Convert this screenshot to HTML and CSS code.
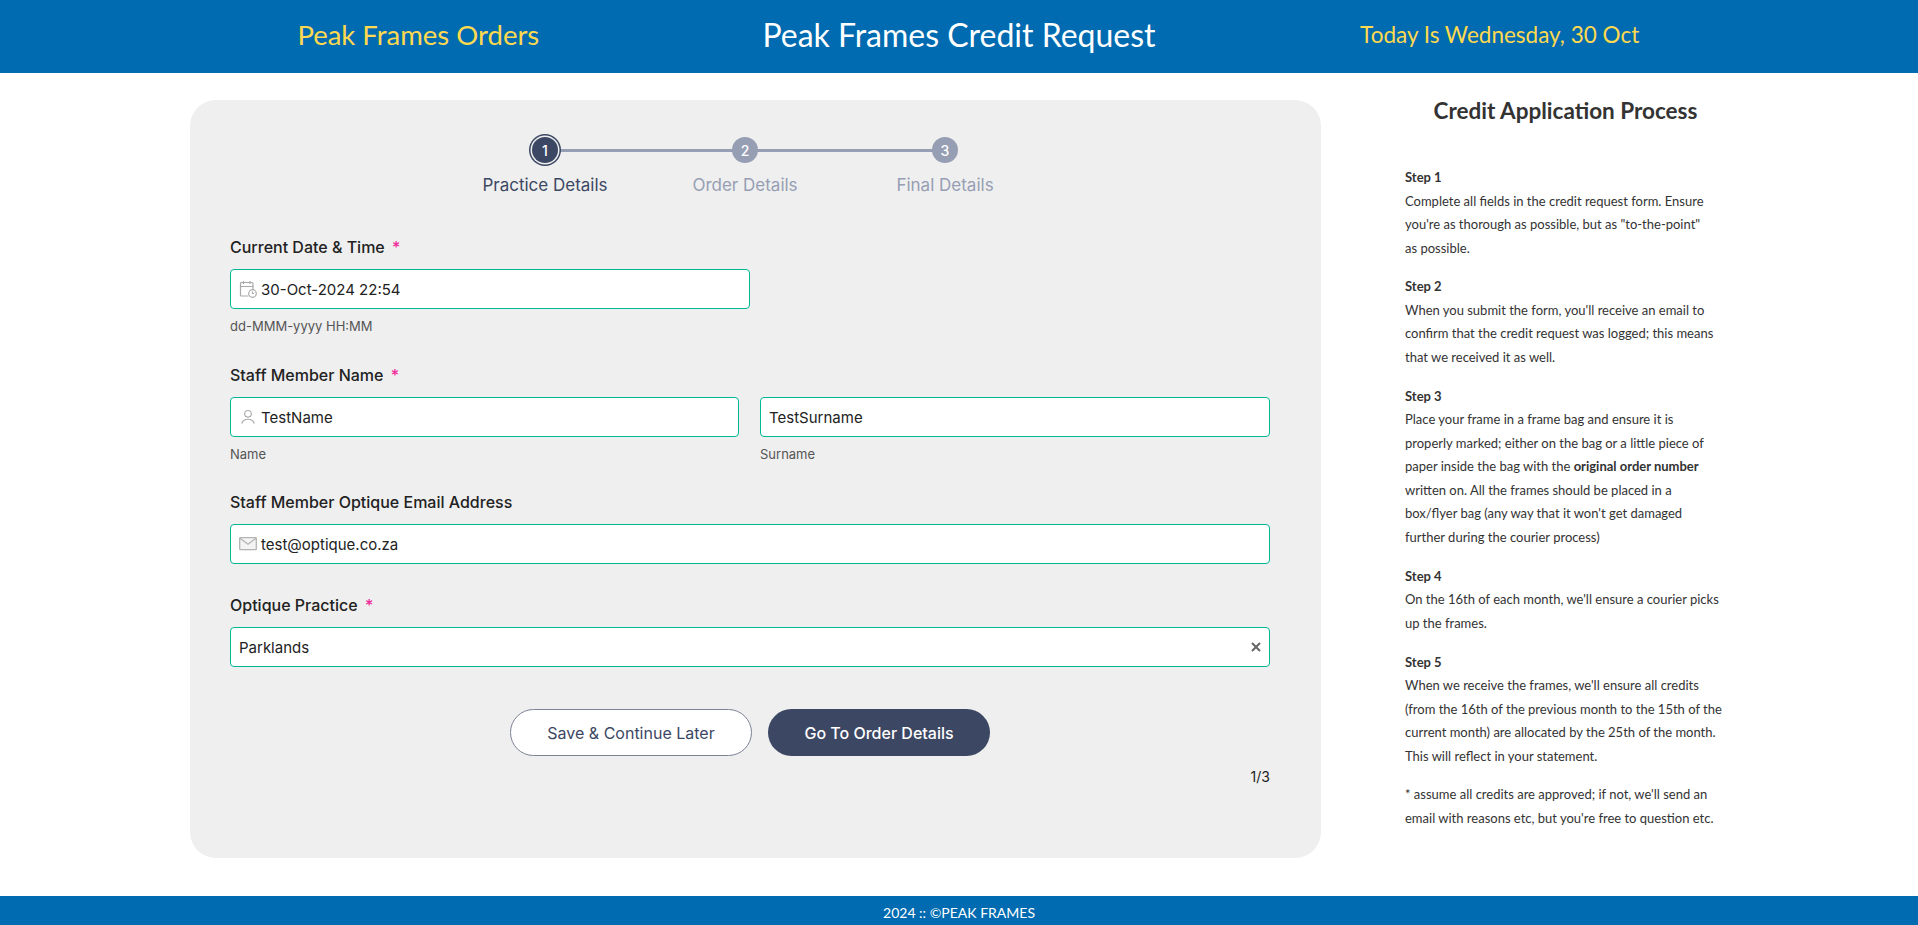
FILE: index.html
```html
<!DOCTYPE html>
<html lang="en">
<head>
<meta charset="utf-8">
<title>Peak Frames Credit Request</title>
<link rel="stylesheet" href="styles.css">
</head>
<body>
<header class="topbar">
  <div class="topbar-side">Peak Frames Orders</div>
  <h1 class="topbar-title">Peak Frames Credit Request</h1>
  <div class="topbar-date">Today Is Wednesday, 30 Oct</div>
</header>
<main class="main">
  <section class="card">
    <ol class="stepper">
      <li class="step step-active"><span class="step-dot">1</span><span class="step-label">Practice Details</span></li>
      <li class="step"><span class="step-dot">2</span><span class="step-label">Order Details</span></li>
      <li class="step"><span class="step-dot">3</span><span class="step-label">Final Details</span></li>
    </ol>
    <form class="form">
      <div class="field field-date">
        <label class="label">Current Date &amp; Time <span class="req">*</span></label>
        <div class="input">
          <svg class="icon" viewBox="0 0 18 18" width="18" height="18" fill="none" stroke="#a9a9a9" stroke-width="1.200"><path d="M9.500 16H2.500a1 1 0 0 1-1-1V3.500a1 1 0 0 1 1-1h10.500a1 1 0 0 1 1 1V9"/><path d="M1.500 6.500h12.500M4.500 1v3M11 1v3"/><circle cx="13.500" cy="13.500" r="3.800"/><path d="M13.500 11.500v2h1.500"/></svg>
          <span class="value">30-Oct-2024 22:54</span>
        </div>
        <div class="hint">dd-MMM-yyyy HH:MM</div>
      </div>
      <div class="field field-name">
        <label class="label">Staff Member Name <span class="req">*</span></label>
        <div class="pair">
          <div>
            <div class="input">
              <svg class="icon" viewBox="0 0 18 18" width="18" height="18" fill="none" stroke="#a9a9a9" stroke-width="1.100"><circle cx="9" cy="5.800" r="3.300"/><path d="M2.800 15.500c.7-2.800 3-4.200 6.200-4.200s5.500 1.400 6.200 4.200"/></svg>
              <span class="value">TestName</span>
            </div>
            <div class="hint">Name</div>
          </div>
          <div>
            <div class="input"><span class="value">TestSurname</span></div>
            <div class="hint">Surname</div>
          </div>
        </div>
      </div>
      <div class="field field-email">
        <label class="label">Staff Member Optique Email Address</label>
        <div class="input">
          <svg class="icon" viewBox="0 0 18 18" width="18" height="18" fill="#f4f4f4" stroke="#b4b4b4" stroke-width="1.300"><rect x="0.700" y="2.700" width="16.600" height="12" rx="0.600"/><path d="M1 3.200l8 6 8-6" fill="none"/></svg>
          <span class="value">test@optique.co.za</span>
        </div>
      </div>
      <div class="field field-practice">
        <label class="label">Optique Practice <span class="req">*</span></label>
        <div class="input input-clear">
          <span class="value">Parklands</span>
          <svg class="clear" viewBox="0 0 10 10" width="10" height="10" fill="none" stroke="#666" stroke-width="2"><path d="M1 1l8 8M9 1L1 9"/></svg>
        </div>
      </div>
      <div class="actions">
        <button type="button" class="btn btn-light">Save &amp; Continue Later</button>
        <button type="button" class="btn btn-dark">Go To Order Details</button>
      </div>
      <div class="page-count">1/3</div>
    </form>
  </section>
  <aside class="side">
    <h2 class="side-title">Credit Application Process</h2>
    <div class="side-block"><h3 class="side-step">Step 1</h3><p>Complete all fields in the credit request form. Ensure<br>you're as thorough as possible, but as "to-the-point"<br>as possible.</p></div>
    <div class="side-block"><h3 class="side-step">Step 2</h3><p>When you submit the form, you'll receive an email to<br>confirm that the credit request was logged; this means<br>that we received it as well.</p></div>
    <div class="side-block"><h3 class="side-step">Step 3</h3><p>Place your frame in a frame bag and ensure it is<br>properly marked; either on the bag or a little piece of<br>paper inside the bag with the <strong>original order number</strong><br>written on. All the frames should be placed in a<br>box/flyer bag (any way that it won't get damaged<br>further during the courier process)</p></div>
    <div class="side-block"><h3 class="side-step">Step 4</h3><p>On the 16th of each month, we'll ensure a courier picks<br>up the frames.</p></div>
    <div class="side-block"><h3 class="side-step">Step 5</h3><p>When we receive the frames, we'll ensure all credits<br>(from the 16th of the previous month to the 15th of the<br>current month) are allocated by the 25th of the month.<br>This will reflect in your statement.</p></div>
    <p class="side-note">* assume all credits are approved; if not, we'll send an<br>email with reasons etc, but you're free to question etc.</p>
  </aside>
</main>
<footer class="footer">2024 :: ©PEAK FRAMES</footer>
</body>
</html>
```
FILE: styles.css
```css
* { box-sizing: border-box; }
html, body { margin: 0; padding: 0; }
body {
  width: 1918px;
  height: 925px;
  overflow: hidden;
  background: #fff;
  font-family: Inter, "Liberation Sans", sans-serif;
  color: #222;
  display: flex;
  flex-direction: column;
}
.topbar {
  height: 73px;
  flex: none;
  background: #006bb0;
  padding: 0 148px 5px;
  display: grid;
  grid-template-columns: 1fr 1fr 1fr;
  align-items: center;
  text-align: center;
  font-family: Lato, sans-serif;
  font-weight: 400;
}
.topbar-side { color: #ffd94f; font-size: 27.500px; }
.topbar-title { margin: 0; color: #fff; font-size: 32px; font-weight: 400; }
.topbar-date { color: #ffd94f; font-size: 22.500px; }
.main {
  flex: 1;
  padding: 27px 0 38px 190px;
  display: flex;
  min-height: 0;
}
.card {
  width: 1131px;
  background: #efefef;
  border-radius: 26px;
  padding: 37px 51px 0 40px;
}
.stepper {
  list-style: none;
  margin: 0 0 0 215px;
  padding: 0;
  display: flex;
  width: 600px;
}
.step {
  width: 200px;
  display: flex;
  flex-direction: column;
  align-items: center;
  position: relative;
  color: #969eb4;
  font-size: 17px;
}
.step + .step::before {
  content: "";
  position: absolute;
  top: 12px;
  right: 50%;
  width: 200px;
  height: 3px;
  background: #969eb4;
}
.step-dot {
  position: relative;
  z-index: 1;
  width: 26px;
  height: 26px;
  border-radius: 50%;
  background: #969eb4;
  color: #fff;
  font-size: 14px;
  font-weight: 500;
  display: flex;
  align-items: center;
  justify-content: center;
}
.step-active { color: #3c4763; }
.step-active .step-dot {
  background: #3c4763;
  box-shadow: 0 0 0 1.500px #efefef, 0 0 0 3px #3c4763;
}
.step-label { margin-top: 11px; line-height: 22px; }
.form { margin-top: 40px; }
.field { display: block; }
.label {
  display: block;
  font-size: 16px;
  font-weight: 500;
  line-height: 22px;
  color: #222;
  margin-bottom: 11px;
}
.req { color: #f0289a; margin-left: 3px; }
.input {
  height: 40px;
  background: #fff;
  border: 1px solid #00b894;
  border-radius: 4px;
  display: flex;
  align-items: center;
  padding-left: 8px;
  font-size: 15px;
  color: #222;
}
.icon { flex: none; margin-right: 4px; }
.input-clear { justify-content: space-between; padding-right: 8px; }
.clear { flex: none; }
.hint {
  font-size: 13px;
  line-height: 18px;
  color: #555;
  margin-top: 8px;
}
.field-date .input { width: 520px; }
.field-name { margin-top: 29px; }
.pair { display: grid; grid-template-columns: 509px 510px; column-gap: 21px; }
.field-email { margin-top: 28px; }
.field-practice { margin-top: 30px; }
.actions {
  margin-top: 42px;
  display: flex;
  justify-content: center;
  gap: 16px;
}
.btn {
  height: 47px;
  border-radius: 24px;
  font-family: Inter, sans-serif;
  font-size: 16px;
  font-weight: 500;
  padding: 0;
}
.btn-light {
  width: 242px;
  background: #fff;
  border: 1px solid #7c8394;
  color: #3c4763;
  font-weight: 400;
}
.btn-dark {
  width: 222px;
  background: #3c4763;
  border: 0;
  color: #fff;
}
.page-count {
  margin-top: 11px;
  text-align: right;
  font-size: 14px;
  line-height: 20px;
  color: #222;
}
.side {
  width: 321px;
  margin-left: 84px;
  color: #333;
  font-family: Lato, sans-serif;
  font-size: 13px;
  line-height: 23.500px;
  white-space: nowrap;
}
.side p { margin: 0; }
.side-title {
  margin: 0 0 44px;
  font-size: 22.500px;
  line-height: 22px;
  font-weight: 700;
  text-align: center;
}
.side-block { margin-bottom: 15.400px; }
.side-step { margin: 0; font-size: 13px; font-weight: 700; line-height: 23.500px; }
.footer {
  height: 29px;
  flex: none;
  background: #006bb0;
  color: #fff;
  font-family: Lato, sans-serif;
  font-weight: 400;
  font-size: 14px;
  text-align: center;
  line-height: 34px;
}
```
